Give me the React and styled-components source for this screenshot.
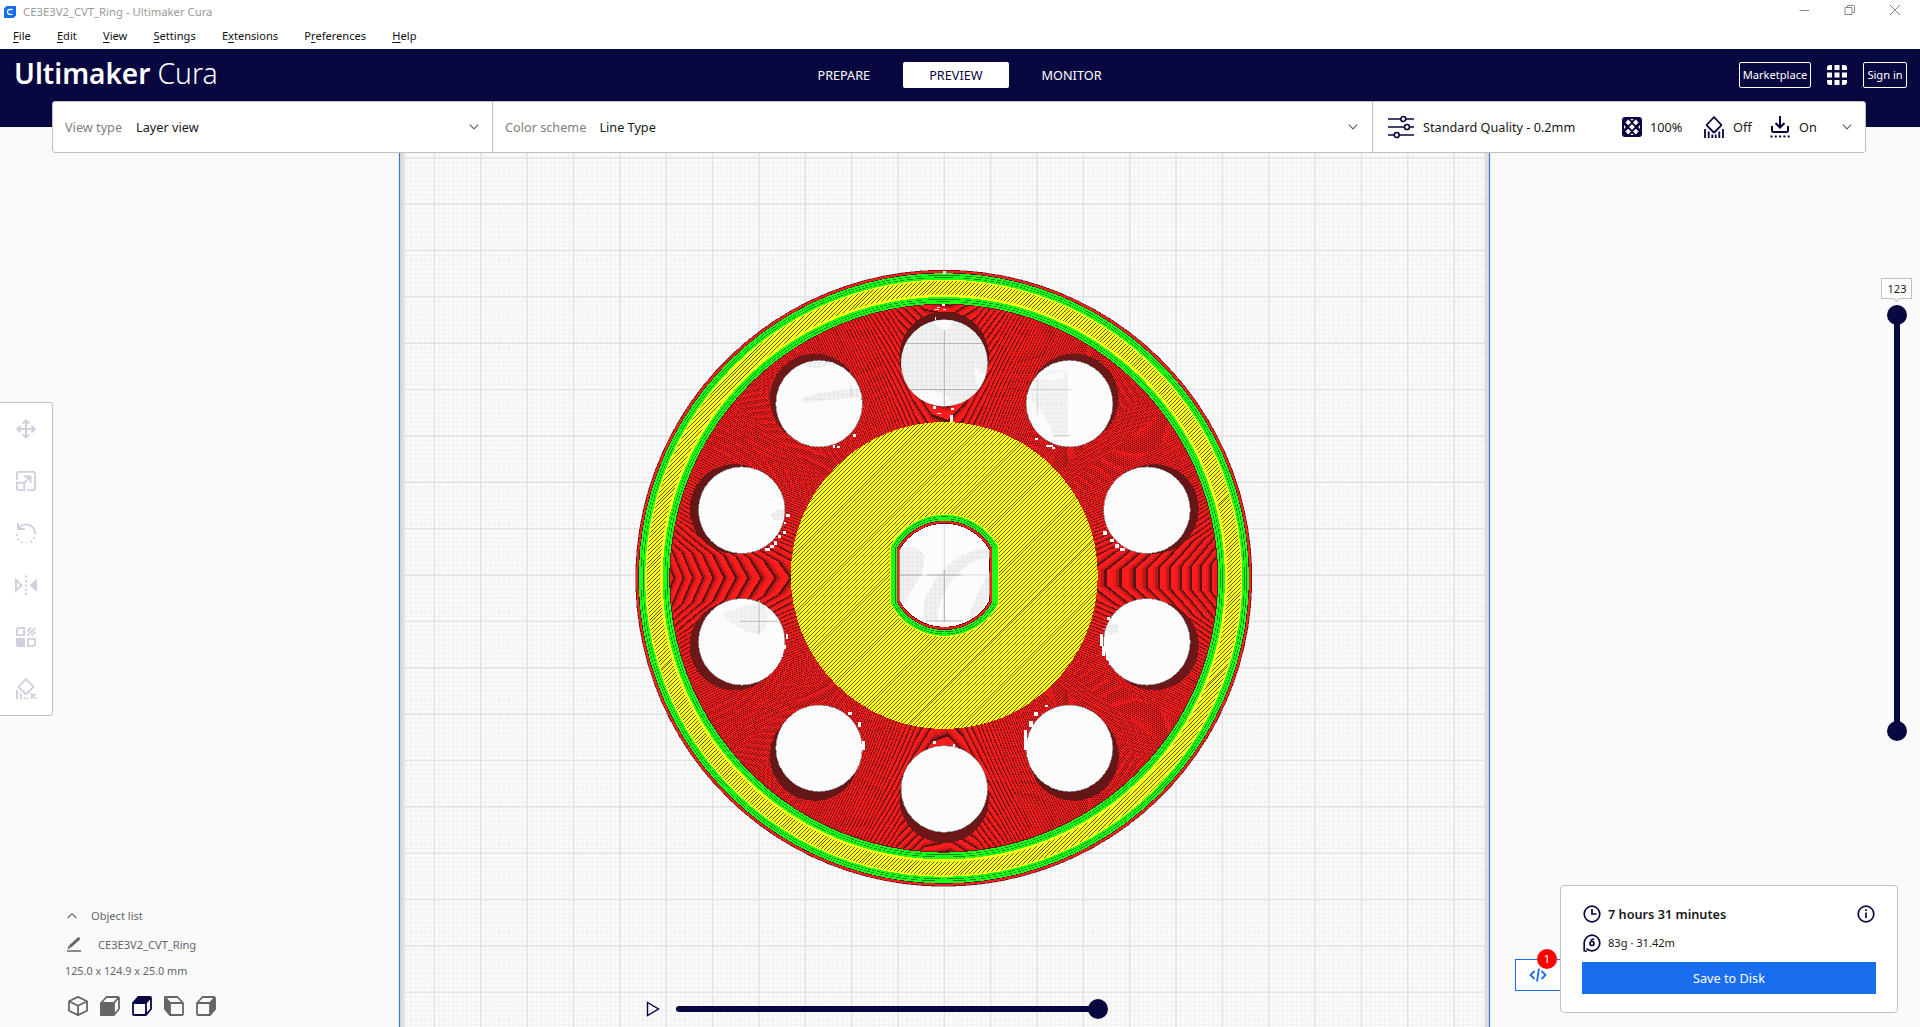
import React from "react";
import styled, { createGlobalStyle } from "styled-components";

const navy = "#08073f";
const blue = "#196ef0";
const line = "#c0c0c0";

const GlobalStyle = createGlobalStyle`
  * { box-sizing: border-box; }
  body { margin: 0; background: #fafafa; overflow: hidden; }
`;

const Window = styled.div`
  display: flex;
  flex-direction: column;
  height: 1027px;
  width: 1920px;
  color: #191919;
  font: 11.1px/16px "Noto Sans", "Open Sans", sans-serif;
`;

/* ---------- title bar and menu ---------- */

const TitleBar = styled.div`
  display: flex;
  align-items: center;
  height: 23px;
  padding: 0 18px 0 4px;
  background: #fff;
  color: #999;
`;

const WindowTitle = styled.span`
  flex: 1;
  margin-left: 7px;
  font-size: 11.3px;
`;

const WindowButtons = styled.div`
  display: flex;
  gap: 31px;
  margin-top: -3px;
`;

const MenuBar = styled.nav`
  display: flex;
  gap: 26.2px;
  height: 26px;
  padding: 5px 13px;
  background: #fff;
  color: #111;
  u { text-underline-offset: 2px; }
`;

/* ---------- header ---------- */

const Header = styled.header`
  display: grid;
  grid-template-columns: 1fr auto 1fr;
  align-items: center;
  height: 78px;
  padding: 0 13px 26px 14px;
  background: ${navy};
`;

const Logo = styled.div`
  color: #fff;
  font-size: ${(p) => p.$size}px;
  line-height: 36px;
  font-weight: ${(p) => p.$weight};
`;

const LogoRow = styled.div`
  display: flex;
  gap: 7px;
  margin-top: -4px;
`;

const Tabs = styled.div`
  display: flex;
  gap: 7px;
  margin: 0 1px 0 -1px;
`;

const Tab = styled.div`
  height: 26px;
  padding: 0 26px;
  border-radius: 2px;
  font-size: 12.7px;
  line-height: 27px;
  background: ${(p) => (p.$active ? "#fff" : "transparent")};
  color: ${(p) => (p.$active ? navy : "#fff")};
`;

const HeaderActions = styled.div`
  display: flex;
  justify-content: flex-end;
  align-items: center;
  gap: 16px;
`;

const OutlineButton = styled.div`
  width: ${(p) => p.$width}px;
  height: 26px;
  border: 1px solid #fff;
  border-radius: 2px;
  color: #fff;
  line-height: 24px;
  text-align: center;
  white-space: nowrap;
`;

/* ---------- stage bar ---------- */

const StageBar = styled.div`
  position: relative;
  z-index: 1;
  display: flex;
  height: 52px;
  width: 1814px;
  margin: -26px 0 0 52px;
  background: #fff;
  border: 1px solid ${line};
  border-radius: 3px;
  font-size: 12.7px;
`;

const StageCell = styled.div`
  display: flex;
  align-items: center;
  width: ${(p) => p.$width}px;
  padding: 0 ${(p) => p.$right}px 0 ${(p) => p.$left}px;
  border-left: ${(p) => (p.$divided ? `1px solid ${line}` : "none")};
`;

const Label = styled.span`
  color: #808080;
  margin-right: ${(p) => p.$gap}px;
`;

const Value = styled.span`
  flex: ${(p) => (p.$grow ? 1 : "none")};
  width: ${(p) => (p.$width ? `${p.$width}px` : "auto")};
  margin-left: ${(p) => p.$left || 0}px;
  white-space: nowrap;
`;

/* ---------- workspace ---------- */

const Workspace = styled.main`
  position: relative;
  display: grid;
  grid-template-columns: 400px 1fr 430px;
  height: 874px;
`;

const SceneLayer = styled.svg`
  position: absolute;
  inset: 0;
`;

const Column = styled.section`
  position: relative;
  display: flex;
  flex-direction: column;
  align-items: ${(p) => p.$align || "flex-start"};
`;

const Toolbar = styled.div`
  width: 53px;
  margin-top: 249px;
  background: #fff;
  border: 1px solid ${line};
  border-left: none;
  border-radius: 0 4px 4px 0;
`;

const Tool = styled.div`
  display: flex;
  align-items: center;
  justify-content: center;
  height: 52px;
`;

const ObjectPanel = styled.div`
  margin: auto 0 0 65px;
  color: #666;
`;

const ObjectRow = styled.div`
  display: flex;
  align-items: center;
  height: ${(p) => p.$height}px;
  gap: ${(p) => p.$gap || 0}px;
  padding-left: ${(p) => p.$left || 0}px;
  font-size: ${(p) => p.$size || 11.1}px;
`;

const ViewRow = styled.div`
  display: flex;
  align-items: center;
  height: 44px;
  gap: 12px;
  padding: 2px 0 0 3px;
`;

const PathPlayer = styled.div`
  display: flex;
  align-items: center;
  height: 20px;
  margin: auto 0 8px 246px;
`;

const PathTrack = styled.div`
  display: flex;
  align-items: center;
  justify-content: flex-end;
  width: 432px;
  height: 6px;
  margin-left: 16px;
  border-radius: 3px;
  background: linear-gradient(${navy}, ${navy}) 0 0 / 422px 6px no-repeat;
`;

const Handle = styled.div`
  flex: none;
  width: 20px;
  height: 20px;
  border-radius: 50%;
  background: ${navy};
`;

const LayerSlider = styled.div`
  display: flex;
  flex-direction: column;
  align-items: center;
  margin: 125px 8px 0 0;
`;

const LayerLabel = styled.div`
  width: 31px;
  height: 21px;
  padding-left: 1px;
  border: 1px solid ${line};
  background: #fff;
  line-height: 20px;
  text-align: center;
`;

const LabelTip = styled.div`
  width: 5px;
  height: 5px;
  margin: -3px 0 3.5px;
  background: #fff;
  border: solid ${line};
  border-width: 0 1px 1px 0;
  transform: rotate(45deg);
`;

const LayerTrack = styled.div`
  width: 6px;
  height: 400px;
  margin: -2px 0;
  background: ${navy};
`;

const PrintArea = styled.div`
  display: flex;
  align-items: flex-end;
  margin: auto 22px 14px 0;
`;

const ScriptButton = styled.div`
  position: relative;
  display: flex;
  align-items: center;
  padding-left: 13px;
  width: 46px;
  height: 32px;
  margin: 0 -1px 22px 0;
  border: 1px solid ${blue};
  background: #fff;
`;

const Badge = styled.span`
  position: absolute;
  top: -11px;
  left: 21px;
  width: 20px;
  height: 20px;
  border-radius: 50%;
  background: #f00;
  color: #fff;
  line-height: 20px;
  text-align: center;
`;

const PrintCard = styled.div`
  position: relative;
  width: 338px;
  height: 128px;
  padding: 17px 21px;
  background: #fff;
  border: 1px solid ${line};
  border-radius: 4px;
`;

const PrintRow = styled.div`
  display: flex;
  align-items: center;
  gap: 7px;
  margin: 0 1px;
  height: ${(p) => p.$height}px;
`;

const Duration = styled.span`
  flex: 1;
  font-size: 12.7px;
  font-weight: 600;
`;

const SaveButton = styled.div`
  height: 32px;
  margin-top: 1px;
  background: ${blue};
  color: #fff;
  font-size: 12.7px;
  line-height: 32px;
  text-align: center;
`;

/* ---------- icons ---------- */

const Glyph = styled.svg`
  flex: none;
  fill: none;
`;

const Icon = ({ size = 20, w = size, h = size, color = navy, sw = 1.5, children }) => (
  <Glyph width={w} height={h} viewBox={`0 0 ${w} ${h}`} stroke={color} strokeWidth={sw}>
    {children}
  </Glyph>
);

const Chevron = ({ up }) => (
  <Icon w={10} h={10} color="#666" sw={1.2}>
    <path d={up ? "M.8 7 5 2.6 9.2 7" : "M.8 2.6 5 7 9.2 2.6"} />
  </Icon>
);

const AppsIcon = () => (
  <Icon size={20}>
    <path
      fill="#fff"
      stroke="none"
      d="M3 0h2v5H0V3a3 3 0 0 1 3-3zM7.5 0h5v5h-5zM15 0h2a3 3 0 0 1 3 3v2h-5zM0 7.5h5v5H0zM7.5 7.5h5v5h-5zM15 7.5h5v5h-5zM0 15h5v5H3a3 3 0 0 1-3-3zM7.5 15h5v5h-5zM15 15h5v2a3 3 0 0 1-3 3h-2z"
    />
  </Icon>
);

const SlidersIcon = () => (
  <Icon w={26} h={24} sw={1.7}>
    <path d="M0 4h12.5M18 4h8M0 12h16M22 12h4M0 20h6M11.5 20H26" />
    <circle cx="15.3" cy="4" r="2.5" />
    <circle cx="19" cy="12" r="2.5" />
    <circle cx="8.7" cy="20" r="2.5" />
  </Icon>
);

const InfillIcon = () => (
  <Icon size={20}>
    <rect width="20" height="20" rx="3" fill={navy} stroke="none" />
    <path
      fill="#fff"
      stroke="none"
      d="M6.2 2.6 9 5.4 6.2 8.2 3.4 5.4zM13.8 2.6l2.8 2.8-2.8 2.8L11 5.4zM10 7.1l2.8 2.9-2.8 2.9L7.2 10zM6.2 11.8 9 14.6 6.2 17.4 3.4 14.6zM13.8 11.8l2.8 2.8-2.8 2.8L11 14.6zM2 8l1.8 2L2 12zM18 8l-1.8 2 1.8 2zM8.2 2h3.6L10 3.8zM8.2 18h3.6L10 16.2z"
    />
  </Icon>
);

const SupportIcon = () => (
  <Icon w={20} h={22} sw={1.8}>
    <path d="M10 1.2 17 8.5a1 1 0 0 1 0 1.2L10.7 16a1 1 0 0 1-1.4 0L3 9.7a1 1 0 0 1 0-1.2z" />
    <path d="M1 13v9M4.7 15.5V22M8.3 18.5V22M11.7 18.5V22M15.3 15.5V22M19 13v9" />
  </Icon>
);

const AdhesionIcon = () => (
  <Icon w={20} h={22} sw={2}>
    <path d="M10 0v11M5.5 7 10 11.5 14.5 7M2 10v4.5a1.5 1.5 0 0 0 1.5 1.5h13a1.5 1.5 0 0 0 1.5-1.5V10" />
    <path d="M.5 20.5H20" strokeDasharray="2 2.3" />
  </Icon>
);

const toolColor = "#d0cfdf";

const MoveIcon = () => (
  <Icon size={20} color={toolColor} sw={2}>
    <path d="M10 1.5v17M1.5 10h17M6.8 4.5 10 1.4l3.2 3.1M6.8 15.5l3.2 3.1 3.2-3.1M4.5 6.8 1.4 10l3.1 3.2M15.5 6.8l3.1 3.2-3.1 3.2" />
  </Icon>
);
const ScaleIcon = () => (
  <Icon size={20} color={toolColor} sw={1.9}>
    <path d="M.9 9V3A2.1 2.1 0 0 1 3 .9h14A2.1 2.1 0 0 1 19.1 3v14a2.1 2.1 0 0 1-2.1 2.1h-6M.9 11.7h7.4v7.4H3A2.1 2.1 0 0 1 .9 17zM8.5 11.5l6-6M8 5.5h6.5V12" />
  </Icon>
);
const RotateIcon = () => (
  <Icon size={20} color={toolColor} sw={2}>
    <path d="M2 0v6h7M2.5 5.5A9 9 0 0 1 19 11" />
    <path d="M18.5 14A9 9 0 0 1 1 10" strokeDasharray="2 2.8" />
  </Icon>
);
const MirrorIcon = () => (
  <Icon w={22} h={20} color={toolColor} sw={2}>
    <path d="M1 5l5.5 5.2L1 15.5z" />
    <path d="M22 4v12.8L14.5 10.2z" fill={toolColor} stroke="none" />
    <path d="M11 .5V20" strokeDasharray="2 2.4" />
  </Icon>
);
const MeshIcon = () => (
  <Icon size={20} color={toolColor} sw={1.9}>
    <path d="M3 .9h5.1v7.2H.9V3A2.1 2.1 0 0 1 3 .9zM11.9 11.9h7.2V17a2.1 2.1 0 0 1-2.1 2.1h-5.1z" />
    <path d="M0 11h9v9H3a3 3 0 0 1-3-3z" fill={toolColor} stroke="none" />
    <path d="M11.5 4.5 15 .7M11.5 8.7l7.8-7.8M15.5 8.7 19.5 4.7" />
  </Icon>
);
const BlockerIcon = () => (
  <Icon w={20} h={22} color={toolColor} sw={1.9}>
    <path d="M10 1.2 17 8.2a1 1 0 0 1 0 1.2L10.7 15.7a1 1 0 0 1-1.4 0L3 9.4a1 1 0 0 1 0-1.2z" />
    <path d="M1 12v9.5M4.8 15.5v6M8.5 19v2.5M11.5 19.5v2M14.7 15.5l4.8 5M19.5 15.5l-4.8 5" />
  </Icon>
);

const boxOutline = "M1 7 6.5 1H18a1 1 0 0 1 1 1v11l-5 6H2a1 1 0 0 1-1-1zM1 7h13v12M14 7l5-6";

const viewShapes = {
  iso: [null, "M10 .9 19 5.2v9.6L10 19.1 1 14.8V5.2zM1 5.2l9 4.6 9-4.6M10 9.8v9.3"],
  front: ["M0 7h14v13H1.5A1.5 1.5 0 0 1 0 18.5z", boxOutline],
  top: ["M0 7 6 0h13l-5 7z", boxOutline],
  left: ["M1 0 6 6v14L0 13V1z", "M19 7l-5.5-6H2a1 1 0 0 0-1 1v11l5 6h12a1 1 0 0 0 1-1zM19 7H6v12M6 7 1 1"],
  right: ["M14 7l5-6 1 12-6 7z", boxOutline],
};

const ViewIcon = ({ kind, active }) => {
  const color = active ? navy : "#666";
  const [solid, outline] = viewShapes[kind];
  return (
    <Icon size={20} color={color} sw={1.8}>
      {solid && <path d={solid} fill={color} stroke="none" />}
      <path d={outline} strokeLinejoin="round" />
    </Icon>
  );
};

/* ---------- 3D scene ---------- */

const CX = 944.3;
const CY = 576;
const RIM_X = 943.8;
const RIM_Y = 578.2;
const CELL = 46.35;

const facetRing = (r, cx, cy, sides = 63) =>
  Array.from({ length: sides }, (_, i) => {
    const a = ((i + 0.5) * 2 * Math.PI) / sides;
    return `${(cx + r * Math.cos(a)).toFixed(2)},${(cy + r * Math.sin(a)).toFixed(2)}`;
  }).join(" ");

// Printed walls seen from above: every layer contributes one shaded ring.
const wallTones = ["#ff1c1c", "#ff1c1c", "#e81a1a", "#b81818", "#5c1313"];
const wallRings = [];
for (let r = 277; r > 150; ) {
  const e = 1 / 16 + ((r - 155) / 120) * (1 / 9 - 1 / 16);
  const step = 1 / (1 - e);
  wallTones.forEach((tone, i) => wallRings.push([r - (step * i) / wallTones.length, tone]));
  r -= step;
}

const holes = Array.from({ length: 10 }, (_, i) => {
  const a = ((18 + 36 * i) * Math.PI) / 180;
  return [Math.cos(a), Math.sin(a)];
});

const hatch = (x0, y0, x1, y1, period) => {
  let d = "";
  const h = y1 - y0;
  for (let x = x0; x < x1 + h; x += period) d += `M${x.toFixed(2)} ${y0}l${-h} ${h}`;
  return d;
};

const circlePath = (r) => `M${RIM_X - r} ${RIM_Y}a${r} ${r} 0 1 0 ${2 * r} 0a${r} ${r} 0 1 0 ${-2 * r} 0Z`;

const bore = (r, flat) => {
  const y = Math.sqrt(r * r - flat * flat);
  return `M${CX + 0.2 - flat} ${575.3 - y}A${r} ${r} 0 0 1 ${CX + 0.2 + flat} ${575.3 - y}V${575.3 + y}A${r} ${r} 0 0 1 ${CX + 0.2 - flat} ${575.3 + y}Z`;
};

const gridPath = (step, from, to) => {
  let d = "";
  for (let i = from; i <= to; i++) {
    const x = CX + i * step;
    const y = 575 + i * step;
    if (x > 400 && x < 1489) d += `M${x.toFixed(2)} 150V1030`;
    if (y > 150 && y < 1030) d += `M400 ${y.toFixed(2)}H1489`;
  }
  return d;
};

const rimBands = [
  [308.7, "#9c9c9c"], [308.2, "#7c1515"], [307.6, "#ff1c1c"], [305.6, "#3f2a10"],
  [305, "#19ff19"], [303.2, "#0c8f16"], [302.6, "#19ff19"], [301, "#0c8f16"], [300.4, "#19ff19"],
  [298.6, "#ffff1c"],
];
const innerBands = [
  [282.5, "#ffff1c"], [281.2, "#19ff19"], [279.2, "#0c8f16"], [278.6, "#19ff19"],
  [276.9, "#0c8f16"], [276.3, "#19ff19"], [274.5, "#7c1313"],
];

const seams = [
  [943, 271, 3, 3], [935, 309, 4, 1], [937, 307, 3, 1], [942, 304, 3, 2], [943, 309, 3, 1], [935, 317, 1, 3],
  [933, 406, 3, 3], [937, 413, 4, 1], [951, 408, 3, 2], [950, 415, 3, 7], [833, 445, 2, 3], [837, 446, 3, 2],
  [853, 434, 3, 3], [786, 514, 4, 3], [784, 522, 2, 2], [783, 531, 3, 3], [778, 535, 3, 3], [765, 548, 5, 3],
  [770, 545, 4, 3], [774, 541, 3, 4], [1035, 438, 3, 2],
  [1046, 445, 7, 2], [1052, 447, 3, 2], [1103, 531, 4, 4], [1110, 539, 4, 3], [1115, 544, 4, 4], [1120, 548, 5, 3],
  [1100, 634, 3, 12], [1102, 646, 3, 10], [1106, 655, 3, 5], [1109, 661, 3, 4], [1107, 617, 3, 3],
  [1024, 730, 3, 20], [1029, 721, 4, 6], [1034, 712, 4, 4], [1045, 705, 3, 2],
  [933, 741, 3, 3], [953, 744, 2, 3], [786, 634, 2, 5], [784, 645, 2, 4], [862, 741, 3, 9], [858, 722, 3, 5],
  [780, 655, 3, 2], [848, 712, 4, 3],
];

const Scene = () => (
  <SceneLayer width="1920" height="874" viewBox="0 153 1920 874">
    <defs>
      <clipPath id="rimClip">
        <path clipRule="evenodd" d={circlePath(297.2) + circlePath(283.6)} />
      </clipPath>
      <clipPath id="hubClip"><circle cx={CX} cy="575.5" r="153.5" /></clipPath>
      <clipPath id="topHole"><circle cx={CX} cy="363" r="43" /></clipPath>
      <clipPath id="boreClip"><path d={bore(51.5, 45)} /></clipPath>
      <pattern id="mesh" width="4.635" height="4.635" patternUnits="userSpaceOnUse" x={CX} y="575">
        <rect width="5" height="5" fill="#f2f2f2" />
        <path d="M0 0H5M0 0V5" stroke="#e2e2e2" strokeWidth="1.3" />
      </pattern>
    </defs>

    <rect x="400" y="150" width="1089" height="880" fill="#fbfbfb" />
    <path d={gridPath(CELL / 10, -130, 130)} stroke="#f1f1f1" strokeWidth="1" />
    <path d={gridPath(CELL, -13, 13)} stroke="#e1e1e1" strokeWidth="1.4" />
    <rect x="400" y="150" width="4.5" height="880" fill="#dedede" />
    <rect x="1484.5" y="150" width="4.5" height="880" fill="#dedede" />
    <path d="M399.5 150V1030M1489.5 150V1030" stroke="#3478d0" strokeWidth="1.2" />

    <g shapeRendering="crispEdges">
      {rimBands.map(([r, fill]) => <polygon key={r} points={facetRing(r, RIM_X, RIM_Y, 98)} fill={fill} />)}
      <path d={hatch(640, 268, 1250, 890, 3.93)} stroke="#45450e" strokeWidth="0.9" clipPath="url(#rimClip)" />
      {innerBands.map(([r, fill]) => <polygon key={r} points={facetRing(r, RIM_X, RIM_Y, 98)} fill={fill} />)}
      {wallRings.filter(([r]) => r < 274).map(([r, fill]) => <polygon key={r} points={facetRing(r, RIM_X, 578)} fill={fill} />)}
      {holes.map(([x, y], i) => <circle key={i} cx={CX + x * 220.5} cy={577.3 + y * 221} r="44.8" fill={i % 2 ? "#651616" : "#6d1818"} />)}
      {holes.map(([x, y], i) => <circle key={i} cx={CX + x * 213} cy={CY + y * 213} r="43.3" fill="#fcfcfc" stroke="#8a8a8a" strokeWidth="0.7" />)}

      <circle cx={CX} cy="575.5" r="153.5" fill="#ffff1c" />
      <path d={hatch(790, 420, 1100, 730, 3.93)} stroke="#52520c" strokeWidth="0.9" clipPath="url(#hubClip)" />
      <path d={bore(61.8, 54.6)} fill="#ffff1c" />
      <path d={bore(60.6, 53.4)} fill="#19ff19" />
      <path d={bore(59, 51.8)} fill="#0c8f16" />
      <path d={bore(58.4, 51.2)} fill="#19ff19" />
      <path d={bore(56.8, 49.6)} fill="#0c8f16" />
      <path d={bore(56.2, 49)} fill="#19ff19" />
      <path d={bore(54.8, 47.8)} fill="#5c1111" />
      <path d={bore(54.2, 47.2)} fill="#ff1c1c" />
      <path d={bore(52.2, 45.3)} fill="#5c1111" />
      <path d={bore(51.5, 44.7)} fill="#fcfcfc" />
      {seams.map(([x, y, w, h]) => <rect key={`${x}-${y}`} x={x} y={y} width={w} height={h} fill="#fff" />)}
    </g>

    <g clipPath="url(#topHole)">
      <path d="M896 315h96v100h-96z" fill="url(#mesh)" />
      <path d="M932 318h24l-8 12q-12 0-16-12zM900 394q32-8 48 2 6 6 0 12h-48zM974 366q14 10 20 24h-16z" fill="#fbfbfb" />
      <path d="M944.3 330V410M900 343.5h90M900 389.5h88" stroke="#b4b4b4" />
    </g>
    <g clipPath="url(#boreClip)">
      <path d="M896 548q24-4 28 8 1 14-10 30l-16 30zM924 618q-4-16 8-32 16-30 50-38l14 4v6q-26-2-44 22-16 22-14 42z" fill="url(#mesh)" />
      <path d="M996 562v24q-10 14-18 32h-10q10-30 28-56z" fill="url(#mesh)" />
      <path d="M900 575H992M944.3 522V622" stroke="#dadada" />
      <path d="M900 575h22M927 575h34M944.3 570V622M925 621h38" stroke="#b0b0b0" />
    </g>
    <path d="M803 398q12-6 56-10v9l-56 6z" fill="url(#mesh)" />
    <path d="M851 386V398" stroke="#cfcfcf" />
    <path d="M806 362h28q-8 8-28 5z" fill="url(#mesh)" />
    <path d="M1031 400l3-20q20-14 34-8v65h-14q-8-22-23-37z" fill="url(#mesh)" opacity=".8" />
    <path d="M1030 389.5h40M1037.3 380v34M1053 435.5h17" stroke="#d2d2d2" />
    <path d="M1038 377q20 8 27-2l-4-4z" fill="#fafafa" />
    <path d="M722 614q32-14 44-8 6 18-6 28-20 0-38-20z" fill="url(#mesh)" opacity=".8" />
    <path d="M740 621.3h38M759 600v34M1103 629h14" stroke="#bcbcbc" />
    <path d="M770 514l8-4h6v10h-10zM1106 626l12-3v10l-10 2z" fill="url(#mesh)" />
  </SceneLayer>
);

/* ---------- app ---------- */

const menus = [["", "F", "ile"], ["", "E", "dit"], ["", "V", "iew"], ["", "S", "ettings"], ["E", "x", "tensions"], ["P", "r", "eferences"], ["", "H", "elp"]];
const tools = [MoveIcon, ScaleIcon, RotateIcon, MirrorIcon, MeshIcon, BlockerIcon];

export default function App() {
  return (
    <Window>
      <GlobalStyle />
      <TitleBar>
        <Icon size={12} sw={1.3} color="#fff">
          <path d="M2.5 0H12v9.5L9.5 12H0V2.5z" fill="#196ef0" stroke="none" />
          <path d="M8.5 3.5h-3A1.8 1.8 0 0 0 3.6 5.2v1.3a1.8 1.8 0 0 0 1.9 1.8h3" />
        </Icon>
        <WindowTitle>CE3E3V2_CVT_Ring - Ultimaker Cura</WindowTitle>
        <WindowButtons>
          <Icon size={14} color="#888" sw={1}><path d="M1.5 7.5h9.5" /></Icon>
          <Icon size={14} color="#888" sw={1}><path d="M2 4.500h7v7H2zM4.500 4.500v-2h6a1 1 0 0 1 1 1v6h-2" /></Icon>
          <Icon size={14} color="#888" sw={1}><path d="M2 2l10 10M12 2 2 12" /></Icon>
        </WindowButtons>
      </TitleBar>
      <MenuBar>
        {menus.map(([a, b, c]) => <span key={c}>{a}<u>{b}</u>{c}</span>)}
      </MenuBar>
      <Header>
        <LogoRow>
          <Logo $weight={600} $size={28}>Ultimaker</Logo>
          <Logo $weight={300} $size={28.4}>Cura</Logo>
        </LogoRow>
        <Tabs>
          <Tab>PREPARE</Tab>
          <Tab $active>PREVIEW</Tab>
          <Tab>MONITOR</Tab>
        </Tabs>
        <HeaderActions>
          <OutlineButton $width={72}>Marketplace</OutlineButton>
          <AppsIcon />
          <OutlineButton $width={44}>Sign in</OutlineButton>
        </HeaderActions>
      </Header>
      <StageBar>
        <StageCell $width={439} $left={12} $right={13}>
          <Label $gap={14}>View type</Label>
          <Value $grow>Layer view</Value>
          <Chevron />
        </StageCell>
        <StageCell $width={880} $left={12} $right={14} $divided>
          <Label $gap={13}>Color scheme</Label>
          <Value $grow>Line Type</Value>
          <Chevron />
        </StageCell>
        <StageCell $width={493} $left={15} $right={13} $divided>
          <SlidersIcon />
          <Value $left={9} $width={199}>Standard Quality - 0.2mm</Value>
          <InfillIcon />
          <Value $left={8} $width={54}>100%</Value>
          <SupportIcon />
          <Value $left={9} $width={37}>Off</Value>
          <AdhesionIcon />
          <Value $left={9} $grow>On</Value>
          <Chevron />
        </StageCell>
      </StageBar>
      <Workspace>
        <Scene />
        <Column>
          <Toolbar>
            {tools.map((ToolIcon, i) => <Tool key={i}><ToolIcon /></Tool>)}
          </Toolbar>
          <ObjectPanel>
            <ObjectRow $height={29} $gap={14} $left={2}><Chevron up /><span>Object list</span></ObjectRow>
            <ObjectRow $height={29} $gap={17} $size={11.1}>
              <Icon w={16} h={16} color="#666" sw={1.5}>
                <path d="M5 9.5 14.5 1" strokeWidth="3" />
                <path d="M2.5 12l1-3.5 2.5 2.5z" fill="#666" stroke="none" />
                <path d="M2 14H16" />
              </Icon>
              <span>CE3E3V2_CVT_Ring</span>
            </ObjectRow>
            <ObjectRow $height={24} $size={10.8}>125.0 x 124.9 x 25.0 mm</ObjectRow>
            <ViewRow>
              {Object.keys(viewShapes).map((kind) => <ViewIcon key={kind} kind={kind} active={kind === "top"} />)}
            </ViewRow>
          </ObjectPanel>
        </Column>
        <Column>
          <PathPlayer>
            <Icon w={14} h={16} sw={1.4}><path d="M1.5 1.5 12.5 8 1.5 14.5z" /></Icon>
            <PathTrack><Handle /></PathTrack>
          </PathPlayer>
        </Column>
        <Column $align="flex-end">
          <LayerSlider>
            <LayerLabel>123</LayerLabel>
            <LabelTip />
            <Handle />
            <LayerTrack />
            <Handle />
          </LayerSlider>
          <PrintArea>
            <ScriptButton>
              <Icon w={18} h={14} color={blue} sw={1.8}><path d="M5.5 3 1.5 7l4 4M12.5 3l4 4-4 4M10 .5 8 13.5" /></Icon>
              <Badge>1</Badge>
            </ScriptButton>
            <PrintCard>
              <PrintRow $height={22}>
                <Icon size={18} sw={1.7}><circle cx="9" cy="9" r="7.8" /><path d="M9 4v5h4.5" /></Icon>
                <Duration>7 hours 31 minutes</Duration>
                <Icon size={18} sw={1.7}><circle cx="9" cy="9" r="7.8" /><path d="M9 7.5V13M9 4.3v1.8" /></Icon>
              </PrintRow>
              <PrintRow $height={36}>
                <Icon size={18} sw={1.7}>
                  <path d="M1.2 17.5V9A7.8 7.8 0 1 1 9 16.8 7.8 7.8 0 0 1 3.5 14.5M1.2 17h3" />
                  <circle cx="9" cy="9.5" r="2" /><path d="M7.5 6.5 11 4.8" />
                </Icon>
                <span>83g · 31.42m</span>
              </PrintRow>
              <SaveButton>Save to Disk</SaveButton>
            </PrintCard>
          </PrintArea>
        </Column>
      </Workspace>
    </Window>
  );
}
